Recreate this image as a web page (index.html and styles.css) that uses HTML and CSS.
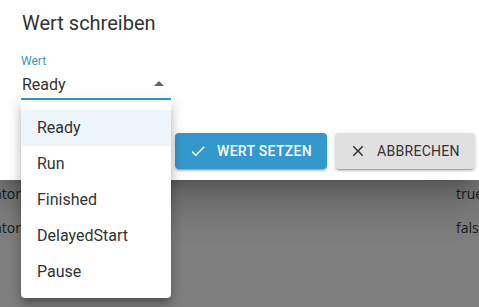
FILE: index.html
```html
<!DOCTYPE html>
<html lang="de">
<head>
    <meta charset="UTF-8">
    <title>Wert schreiben</title>
    <link rel="stylesheet" href="styles.css">
</head>
<body>

    <div class="dialog">
        <h2 class="dialog-title">Wert schreiben</h2>
        <div class="field">
            <label class="field-label">Wert</label>
            <div class="select">
                <span class="select-value">Ready</span>
                <span class="select-arrow"></span>
            </div>
            <ul class="menu">
                <li class="menu-item selected">Ready</li>
                <li class="menu-item">Run</li>
                <li class="menu-item">Finished</li>
                <li class="menu-item">DelayedStart</li>
                <li class="menu-item">Pause</li>
            </ul>
        </div>
        <div class="actions">
            <button class="btn btn-primary">
                <svg width="18" height="18" viewBox="0 0 24 24"><path d="M9 16.17L4.83 12l-1.42 1.41L9 19 21 7l-1.41-1.41z" fill="currentColor"/></svg>
                Wert setzen
            </button>
            <button class="btn btn-default">
                <svg width="18" height="18" viewBox="0 0 24 24"><path d="M19 6.41L17.59 5 12 10.59 6.41 5 5 6.41 10.59 12 5 17.59 6.41 19 12 13.41 17.59 19 19 17.59 13.41 12z" fill="currentColor"/></svg>
                Abbrechen
            </button>
        </div>
    </div>

    <div class="backdrop">
        <div class="row">
            <span class="cell-name">Indikator</span>
            <span class="cell-value">true</span>
        </div>
        <div class="row">
            <span class="cell-name">Indikator</span>
            <span class="cell-value">false</span>
        </div>
    </div>

</body>
</html>
```

FILE: styles.css
```css
/* General body styling */
body {
    margin: 0;
    font-family: Roboto, Arial, sans-serif;
    background-color: #7f7f7f;
    overflow: hidden;
    height: 307px;
}

/* Dialog */
.dialog {
    position: relative;
    z-index: 2;
    height: 180px;
    background-color: #fff;
    box-shadow: 0 11px 15px -7px rgba(0, 0, 0, 0.2), 0 24px 38px 3px rgba(0, 0, 0, 0.14), 0 9px 46px 8px rgba(0, 0, 0, 0.12);
    box-sizing: border-box;
    padding-top: 11px;
}

.dialog-title {
    margin: 0 0 0 22px;
    font-size: 20px;
    font-weight: 400;
    color: #333;
    line-height: 24px;
}

/* Select field */
.field {
    position: relative;
    width: 150px;
    margin: 19px 0 0 21px;
}

.field-label {
    display: block;
    font-size: 12px;
    line-height: 14px;
    color: #3399cc;
}

.select {
    display: flex;
    align-items: center;
    justify-content: space-between;
    height: 30px;
    padding: 0 7px 0 1px;
    border-bottom: 2px solid #3399cc;
}

.select-value {
    font-size: 16px;
    color: #333;
    margin-top: 3px;
}

.select-arrow {
    width: 0;
    height: 0;
    border-left: 5px solid transparent;
    border-right: 5px solid transparent;
    border-bottom: 5px solid #666;
    margin-top: 1px;
}

/* Dropdown menu */
.menu {
    position: absolute;
    top: 48px;
    left: 0;
    width: 150px;
    margin: 0;
    padding: 8px 0;
    list-style: none;
    background-color: #fff;
    border-radius: 0 0 4px 4px;
    box-shadow: 0 5px 5px -3px rgba(0, 0, 0, 0.2), 0 8px 10px 1px rgba(0, 0, 0, 0.14), 0 3px 14px 2px rgba(0, 0, 0, 0.12);
    z-index: 3;
}

.menu-item {
    height: 36px;
    line-height: 36px;
    padding-left: 16px;
    font-size: 16px;
    color: #333;
}

.menu-item.selected {
    background-color: #edf5fa;
}

/* Buttons */
.actions {
    display: flex;
    justify-content: flex-end;
    gap: 8px;
    padding-right: 4px;
    margin-top: 33px;
}

.btn {
    display: flex;
    align-items: center;
    gap: 10px;
    height: 36px;
    border: none;
    border-radius: 4px;
    font-family: Roboto, Arial, sans-serif;
    font-size: 14px;
    letter-spacing: 0.3px;
    text-transform: uppercase;
    cursor: pointer;
    box-shadow: 0 3px 1px -2px rgba(0, 0, 0, 0.2), 0 2px 2px 0 rgba(0, 0, 0, 0.14), 0 1px 5px 0 rgba(0, 0, 0, 0.12);
}

.btn-primary {
    width: 152px;
    padding-left: 14px;
    background-color: #3399cc;
    color: #fff;
    font-weight: 500;
}

.btn-default {
    width: 140px;
    padding-left: 14px;
    background-color: #e0e0e0;
    color: #333;
    font-weight: 400;
}

/* Page behind the dialog */
.backdrop {
    padding-top: 4px;
}

.row {
    display: flex;
    justify-content: space-between;
    align-items: flex-start;
    height: 34px;
    line-height: 20px;
    font-family: "Open Sans", sans-serif;
    font-size: 14px;
    color: #1a1a1a;
}

.cell-name {
    width: 21px;
    overflow: hidden;
    display: flex;
    justify-content: flex-end;
}

.cell-value {
    width: 23px;
    overflow: hidden;
}
```
